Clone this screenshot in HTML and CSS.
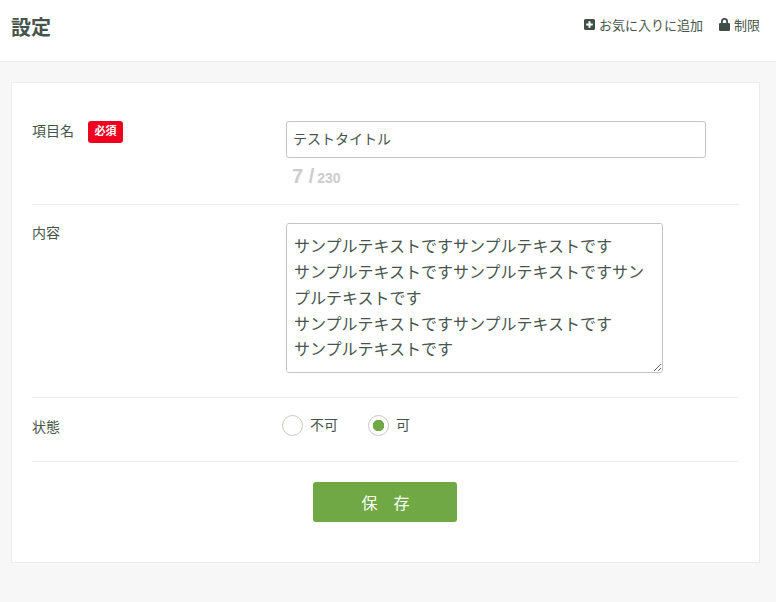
FILE: index.html
```html
<!DOCTYPE html>
<html lang="ja">
<head>
    <meta charset="UTF-8">
    <meta name="viewport" content="width=device-width, initial-scale=1.0">
    <title>設定</title>
    <link rel="stylesheet" href="styles.css">
</head>
<body>
    <header class="page-header">
        <h1 class="page-title">設定</h1>
        <nav class="header-links">
            <a class="header-link" href="#">
                <svg class="icon" width="11" height="11" viewBox="0 0 11 11"><path fill-rule="evenodd" d="M1.5 0h8A1.5 1.5 0 0 1 11 1.500v8A1.500 1.500 0 0 1 9.500 11h-8A1.500 1.500 0 0 1 0 9.500v-8A1.500 1.500 0 0 1 1.500 0zM4.500 2.200v2.300H2.200v2h2.300v2.300h2V6.500h2.300v-2H6.500V2.200z"/></svg>
                お気に入りに追加
            </a>
            <a class="header-link" href="#">
                <svg class="icon" width="11" height="13" viewBox="0 0 11 13"><path fill-rule="evenodd" d="M2 5V3.500a3.500 3.500 0 0 1 7 0V5h.8A1.200 1.200 0 0 1 11 6.200v5.600A1.200 1.200 0 0 1 9.800 13H1.200A1.200 1.200 0 0 1 0 11.800V6.200A1.200 1.200 0 0 1 1.200 5zM3.800 5h3.400V3.500a1.700 1.700 0 0 0-3.400 0z"/></svg>
                制限
            </a>
        </nav>
    </header>

    <main class="content">
        <form class="card">
            <div class="form-row row-title">
                <div class="form-label">
                    <span>項目名</span>
                    <span class="required">必須</span>
                </div>
                <div class="form-field">
                    <input class="text-input" type="text" value="テストタイトル">
                    <div class="counter"><span class="counter-now">7 /</span> <span class="counter-max">230</span></div>
                </div>
            </div>
            <div class="form-row row-body">
                <div class="form-label">内容</div>
                <div class="form-field">
                    <textarea class="text-area">サンプルテキストですサンプルテキストです
サンプルテキストですサンプルテキストですサンプルテキストです
サンプルテキストですサンプルテキストです
サンプルテキストです</textarea>
                </div>
            </div>
            <div class="form-row row-status">
                <div class="form-label">状態</div>
                <div class="radio-group">
                    <label class="radio"><input type="radio" name="status"><span>不可</span></label>
                    <label class="radio"><input type="radio" name="status" checked><span>可</span></label>
                </div>
            </div>
            <div class="form-actions">
                <button class="save-btn" type="button">保　存</button>
            </div>
        </form>
    </main>
</body>
</html>
```

FILE: styles.css
```css
* {
    box-sizing: border-box;
}

body {
    margin: 0;
    background-color: #f7f7f7;
    color: #46544b;
    font-family: "Liberation Sans", "Noto Sans CJK JP", sans-serif;
    font-size: 14px;
}

.page-header {
    display: flex;
    justify-content: space-between;
    align-items: center;
    height: 62px;
    padding: 0 16px 8px 11px;
    background-color: #ffffff;
    border-bottom: 1px solid #ececec;
}

.page-title {
    margin: 0;
    font-size: 20px;
    font-weight: bold;
}

.header-links {
    display: flex;
    gap: 16px;
    margin-bottom: 4px;
}

.header-link {
    display: flex;
    align-items: center;
    gap: 4px;
    color: #46544b;
    font-size: 13px;
    text-decoration: none;
}

.icon {
    fill: #3f4f45;
}

.content {
    padding: 20px 16px 39px 11px;
}

.card {
    height: 481px;
    padding: 0 20px;
    background-color: #ffffff;
    border: 1px solid #ececec;
}

.form-row {
    display: flex;
    border-bottom: 1px solid #ececec;
}

.row-title {
    height: 122px;
    padding-top: 38px;
}

.row-body {
    height: 193px;
    padding-top: 18px;
}

.row-status {
    height: 64px;
    padding-top: 17px;
}

.form-label {
    display: flex;
    align-items: flex-start;
    gap: 14px;
    width: 254px;
    line-height: 20px;
}

.row-status .form-label {
    padding-top: 2px;
}

.required {
    width: 35px;
    height: 22px;
    background-color: #f0001e;
    border-radius: 3px;
    color: #ffffff;
    font-size: 11px;
    font-weight: bold;
    line-height: 20px;
    text-align: center;
}

.text-input {
    display: block;
    width: 420px;
    height: 37px;
    padding: 0 6px 4px;
    border: 1px solid #c4c4c4;
    border-radius: 3px;
    color: #46544b;
    font-family: inherit;
    font-size: 14px;
    outline: none;
}

.counter {
    margin: 5px 0 0 6px;
    color: #cccccc;
    font-weight: bold;
    line-height: 26px;
}

.counter-now {
    font-size: 20px;
}

.counter-max {
    margin-left: -1px;
    font-size: 14px;
}

.text-area {
    display: block;
    width: 377px;
    height: 150px;
    padding: 10.400px 7px;
    border: 1px solid #c4c4c4;
    border-radius: 3px;
    color: #46544b;
    font-family: inherit;
    font-size: 16px;
    line-height: 25.7px;
    outline: none;
}

.radio-group {
    display: flex;
    gap: 30px;
    margin-left: -4px;
    margin-top: -1px;
}

.radio {
    display: flex;
    align-items: center;
    gap: 7px;
    height: 22px;
}

.radio span {
    margin-top: -2px;
}

.radio input {
    appearance: none;
    width: 21px;
    height: 21px;
    margin: 0;
    background-color: #ffffff;
    border: 1px solid #c8c8c0;
    border-radius: 50%;
}

.radio input:checked {
    background: radial-gradient(circle, #70a845 0, #70a845 5.500px, #ffffff 6px);
}

.form-actions {
    display: flex;
    justify-content: center;
    padding: 20px 2px 0 0;
}

.save-btn {
    width: 144px;
    height: 40px;
    background-color: #70a845;
    border: none;
    border-radius: 3px;
    color: #ffffff;
    font-family: inherit;
    font-size: 16px;
    text-indent: 2px;
}
```
